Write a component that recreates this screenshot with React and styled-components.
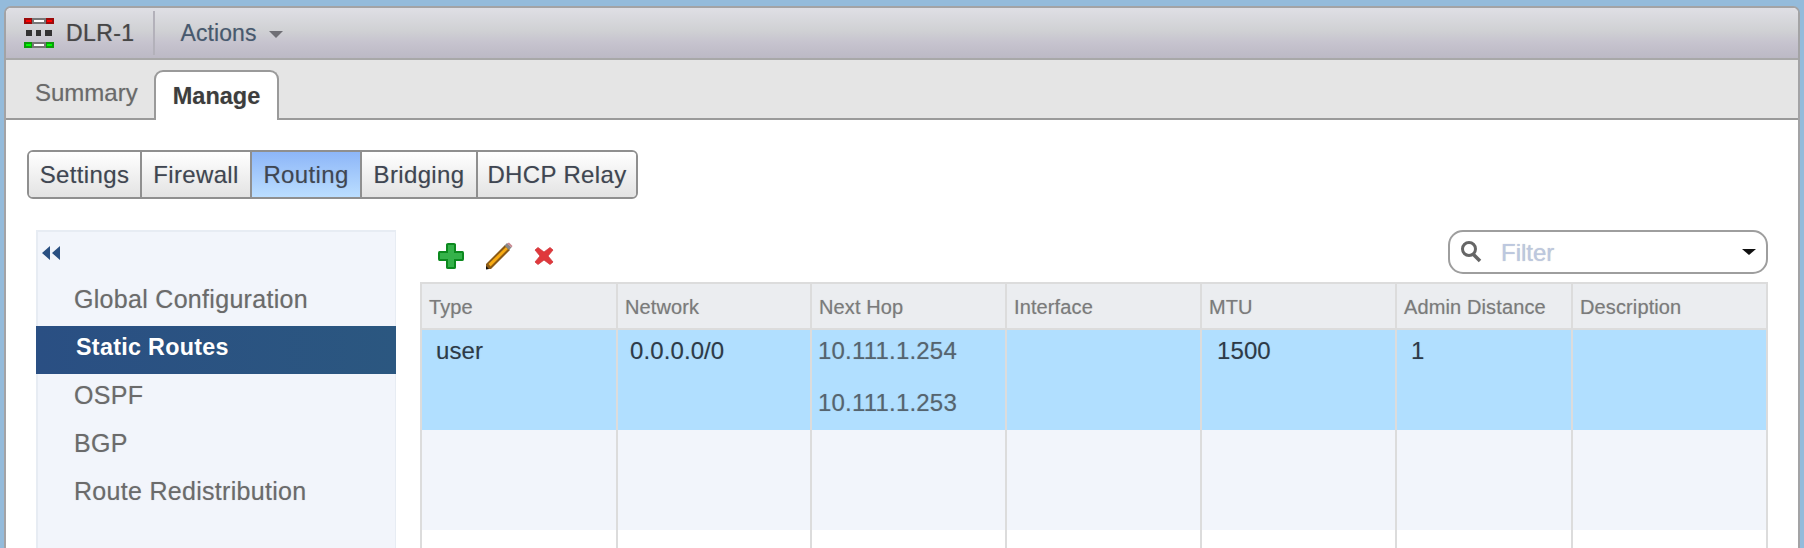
import React from "react";
import styled, { createGlobalStyle } from "styled-components";

const Global = createGlobalStyle`
  html, body { margin: 0; padding: 0; height: 100%; background: #94bbdb; overflow: hidden; }
  body { font-family: "Liberation Sans", Arial, sans-serif; }
`;

const Page = styled.div`
  box-sizing: border-box;
  height: 548px;
  width: 1804px;
  padding: 6px 4px 0 4px;
  background: #94bbdb;
  overflow: hidden;
`;
const Panel = styled.div`
  box-sizing: border-box;
  height: 542px;
  border: 2px solid #a3a3a5;
  border-bottom: none;
  border-radius: 7px 7px 0 0;
  background: #fff;
  display: flex;
  flex-direction: column;
  overflow: hidden;
  text-shadow: 0 0 1px rgba(90, 90, 90, 0.35);
`;
const TitleBar = styled.div`
  box-sizing: border-box;
  height: 52px;
  flex: none;
  display: flex;
  align-items: center;
  padding-left: 18px;
  background: linear-gradient(#dfdfe5, #d0d1d4 45%, #c6c3ce 70%, #bcb9c5);
  border-bottom: 2px solid #a8a8a8;
`;
const TitleName = styled.span`
  font-size: 23px;
  letter-spacing: 0.4px;
  color: #464646;
  margin-left: 12px;
  -webkit-text-stroke: 0.2px #464646;
`;
const TitleDivider = styled.span`
  width: 2px;
  height: 44px;
  margin: 0 25px 0 19px;
  background: #b3b1ba;
`;
const ActionsLabel = styled.span`
  font-size: 23px;
  letter-spacing: 0.1px;
  color: #47596f;
`;
const Caret = styled.span`
  width: 0;
  height: 0;
  margin-left: 12px;
  margin-top: 2px;
  border-left: 7px solid transparent;
  border-right: 7px solid transparent;
  border-top: 7px solid #6f6f75;
`;
const TabBar = styled.div`
  box-sizing: border-box;
  height: 60px;
  flex: none;
  display: flex;
  align-items: flex-end;
  background: #e5e5e5;
  border-bottom: 2px solid #9a9a9a;
  padding-left: 29px;
`;
const Tab = styled.div`
  box-sizing: border-box;
  height: ${(p) => (p.$active ? "50px" : "48px")};
  font-size: 24px;
  display: flex;
  align-items: center;
  ${(p) =>
    p.$active
      ? `
    width: 125px;
    justify-content: center;
    margin-bottom: -2px;
    background: #fff;
    color: #3d3d3d;
    font-weight: bold;
    font-size: 23.5px;
    border: 2px solid #9a9a9a;
    border-bottom: none;
    border-radius: 9px 9px 0 0;
  `
      : `
    width: 119px;
    color: #6a6a6a;
    padding-bottom: 2px;
  `}
`;
const Content = styled.div`
  flex: 1;
  min-height: 0;
  padding: 30px 0 0 21px;
  display: flex;
  flex-direction: column;
  overflow: hidden;
`;
const SegmentBar = styled.div`
  box-sizing: border-box;
  display: flex;
  align-self: flex-start;
  height: 49px;
  border: 2px solid #8f8f8f;
  border-radius: 6px;
  overflow: hidden;
`;
const Segment = styled.div`
  box-sizing: border-box;
  width: ${(p) => p.$w}px;
  display: flex;
  align-items: center;
  justify-content: center;
  font-size: 24px;
  letter-spacing: 0.35px;
  color: #3f4652;
  background: ${(p) =>
    p.$active
      ? "linear-gradient(#8db6f8, #bbdeff)"
      : "linear-gradient(#ffffff, #e3e3e3)"};
  & + & { border-left: 2px solid #8f8f8f; }
`;
const Body = styled.div`
  flex: 1;
  min-height: 0;
  display: flex;
  margin-top: 31px;
`;
const Sidebar = styled.div`
  box-sizing: border-box;
  width: 360px;
  margin-left: 9px;
  flex: none;
  background: #f2f5fb;
  border: 2px solid #e7ecf3;
  border-bottom: none;
  border-right-width: 1px;
`;
const Collapse = styled.div`
  height: 46px;
  padding: 14px 0 0 4px;
  box-sizing: border-box;
`;
const NavItem = styled.div`
  box-sizing: border-box;
  height: 48px;
  margin: 0 -1px 0 -2px;
  display: flex;
  align-items: center;
  letter-spacing: 0.3px;
  padding-bottom: 5px;
  font-size: ${(p) => (p.$active ? "23.3px" : "25px")};
  font-weight: ${(p) => (p.$active ? "bold" : "normal")};
  padding-left: ${(p) => (p.$active ? "40px" : "38px")};
  color: ${(p) => (p.$active ? "#fff" : "#6b6b6b")};
  background: ${(p) =>
    p.$active ? "linear-gradient(90deg, #2a4f83, #2b5780)" : "transparent"};
`;
const Main = styled.div`
  width: 1348px;
  margin-left: 24px;
  flex: none;
  display: flex;
  flex-direction: column;
`;
const Toolbar = styled.div`
  height: 52px;
  flex: none;
  display: flex;
  align-items: flex-start;
`;
const ToolIcons = styled.div`
  display: flex;
  flex: 1;
  align-items: center;
  padding: 12px 0 0 18px;
  height: 28px;
  gap: 21px;
`;
const Filter = styled.div`
  box-sizing: border-box;
  width: 320px;
  height: 44px;
  display: flex;
  align-items: center;
  border: 2px solid #9e9e9e;
  border-radius: 15px;
  padding: 0 10px 0 10px;
  background: #fff;
`;
const FilterLabel = styled.span`
  flex: 1;
  margin-left: 19px;
  padding-top: 2px;
  font-size: 24px;
  color: #bcc8e0;
`;
const FilterCaret = styled.span`
  width: 0;
  height: 0;
  border-left: 7px solid transparent;
  border-right: 7px solid transparent;
  border-top: 6px solid #111;
`;
const COLS = "196px 194px 195px 195px 195px 176px 1fr";
const Table = styled.div`
  box-sizing: border-box;
  width: 1348px;
  flex: 1;
  border-top: 2px solid #dcdcdc;
  border-right: 2px solid #dcdcdc;
`;
const Row = styled.div`
  display: grid;
  grid-template-columns: ${COLS};
  height: ${(p) => p.$h}px;
  background: ${(p) => p.$bg};
  border-bottom: ${(p) => (p.$header ? "2px solid #dcdcdc" : "none")};
`;
const HeadCell = styled.div`
  box-sizing: border-box;
  border-left: 2px solid #dcdcdc;
  padding: 12px 0 0 7px;
  font-size: 20px;
  letter-spacing: 0.12px;
  color: #7b7b7b;
`;
const Cell = styled.div`
  box-sizing: border-box;
  border-left: 2px solid #dcdcdc;
  padding: 7px 0 0 ${(p) => p.$pad}px;
  font-size: 24px;
  line-height: 27px;
  letter-spacing: 0.1px;
  color: ${(p) => p.$color || "#2d3a48"};
`;
const HopLine = styled.div`
  height: 52px;
  padding-left: 1px;
  letter-spacing: 0.2px;
`;

const DeviceIcon = () => (
  <svg width="30" height="30" viewBox="0 0 30 30">
    <rect x="0" y="0" width="30" height="6" fill="#777" />
    <rect x="0" y="0" width="8" height="6" fill="#9c0a0a" />
    <rect x="22" y="0" width="8" height="6" fill="#9c0a0a" />
    <rect x="2" y="2" width="5" height="2" fill="#f00" />
    <rect x="23" y="2" width="5" height="2" fill="#f00" />
    <rect x="10" y="2" width="10" height="2" fill="#fff" />
    <rect x="2" y="12" width="6" height="6" fill="#333" />
    <rect x="12" y="12" width="5" height="6" fill="#333" />
    <rect x="21" y="12" width="7" height="6" fill="#333" />
    <rect x="0" y="24" width="30" height="6" fill="#777" />
    <rect x="0" y="24" width="8" height="6" fill="#0a9c0a" />
    <rect x="22" y="24" width="8" height="6" fill="#0a9c0a" />
    <rect x="2" y="26" width="5" height="2" fill="#0f0" />
    <rect x="23" y="26" width="5" height="2" fill="#0f0" />
    <rect x="10" y="26" width="10" height="2" fill="#fff" />
  </svg>
);
const CollapseIcon = () => (
  <svg width="18" height="14" viewBox="0 0 18 14">
    <path d="M8 0V14L0 7Z M18 0V14L10 7Z" fill="#2a5082" />
  </svg>
);
const PlusIcon = () => (
  <svg width="26" height="26" viewBox="0 0 26 26">
    <path
      d="M9 1.500C9 1 9.500 1 10 1H16C16.500 1 17 1 17 1.500V9H24.500C25 9 25 9.500 25 10V16C25 16.500 25 17 24.500 17H17V24.500C17 25 16.500 25 16 25H10C9.500 25 9 25 9 24.500V17H1.500C1 17 1 16.500 1 16V10C1 9.500 1 9 1.500 9H9Z"
      fill="#35b24a"
      stroke="#0c8a1f"
      strokeWidth="2"
    />
  </svg>
);
const PencilIcon = () => (
  <svg width="28" height="28" viewBox="0 0 28 28">
    <path d="M1 22L20 3L25 8L6 27L1 27Z" fill="#8a5a17" />
    <path d="M3.500 22L21 5L23 7L5.500 24.500Z" fill="#f8ab12" />
    <path d="M1 24L4 27L1 27.500Z" fill="#111" />
    <path d="M19.500 3.500L22 1L26.500 5.500L24 8Z" fill="#888" />
    <path d="M22 1.500L24 0.500L27.500 4L26.500 5.500Z" fill="#c98a92" />
  </svg>
);
const CrossIcon = () => (
  <svg width="20" height="18" viewBox="0 0 20 18">
    <path
      d="M1 3L4 0.500L10 5L16 0.500L19 3L14 9L19 15L16 17.500L10 13L4 17.500L1 15L6 9Z"
      fill="#e0383c"
      stroke="#cf3a3e"
      strokeWidth="0.8"
    />
  </svg>
);
const SearchIcon = () => (
  <svg width="22" height="24" viewBox="0 0 22 24" fill="none">
    <circle cx="9" cy="9" r="6.500" stroke="#666" strokeWidth="3" />
    <path d="M13.500 14.500L20 21" stroke="#666" strokeWidth="3.500" />
  </svg>
);

const heads = ["Type", "Network", "Next Hop", "Interface", "MTU", "Admin Distance", "Description"];
const segments = [
  ["Settings", 111],
  ["Firewall", 110],
  ["Routing", 110, true],
  ["Bridging", 116],
  ["DHCP Relay", 160],
];
const navs = ["Global Configuration", "Static Routes", "OSPF", "BGP", "Route Redistribution"];

export default function App() {
  return (
    <Page>
      <Global />
      <Panel>
        <TitleBar>
          <DeviceIcon />
          <TitleName>DLR-1</TitleName>
          <TitleDivider />
          <ActionsLabel>Actions</ActionsLabel>
          <Caret />
        </TitleBar>
        <TabBar>
          <Tab>Summary</Tab>
          <Tab $active>Manage</Tab>
        </TabBar>
        <Content>
          <SegmentBar>
            {segments.map(([label, w, active]) => (
              <Segment key={label} $w={w} $active={active}>
                {label}
              </Segment>
            ))}
          </SegmentBar>
          <Body>
            <Sidebar>
              <Collapse>
                <CollapseIcon />
              </Collapse>
              {navs.map((n) => (
                <NavItem key={n} $active={n === "Static Routes"}>
                  {n}
                </NavItem>
              ))}
            </Sidebar>
            <Main>
              <Toolbar>
                <ToolIcons>
                  <PlusIcon />
                  <PencilIcon />
                  <CrossIcon />
                </ToolIcons>
                <Filter>
                  <SearchIcon />
                  <FilterLabel>Filter</FilterLabel>
                  <FilterCaret />
                </Filter>
              </Toolbar>
              <Table>
                <Row $h={44} $bg="#ebedf0" $header>
                  {heads.map((h) => (
                    <HeadCell key={h}>{h}</HeadCell>
                  ))}
                </Row>
                <Row $h={100} $bg="#b1dfff">
                  <Cell $pad={14}>user</Cell>
                  <Cell $pad={12}>0.0.0.0/0</Cell>
                  <Cell $pad={5} $color="#55646f">
                    <HopLine>10.111.1.254</HopLine>
                    <HopLine>10.111.1.253</HopLine>
                  </Cell>
                  <Cell />
                  <Cell $pad={15}>1500</Cell>
                  <Cell $pad={14}>1</Cell>
                  <Cell />
                </Row>
                <Row $h={100} $bg="#f2f5fb">
                  {heads.map((h) => (
                    <Cell key={h} />
                  ))}
                </Row>
                <Row $h={40} $bg="#fff">
                  {heads.map((h) => (
                    <Cell key={h} />
                  ))}
                </Row>
              </Table>
            </Main>
          </Body>
        </Content>
      </Panel>
    </Page>
  );
}
